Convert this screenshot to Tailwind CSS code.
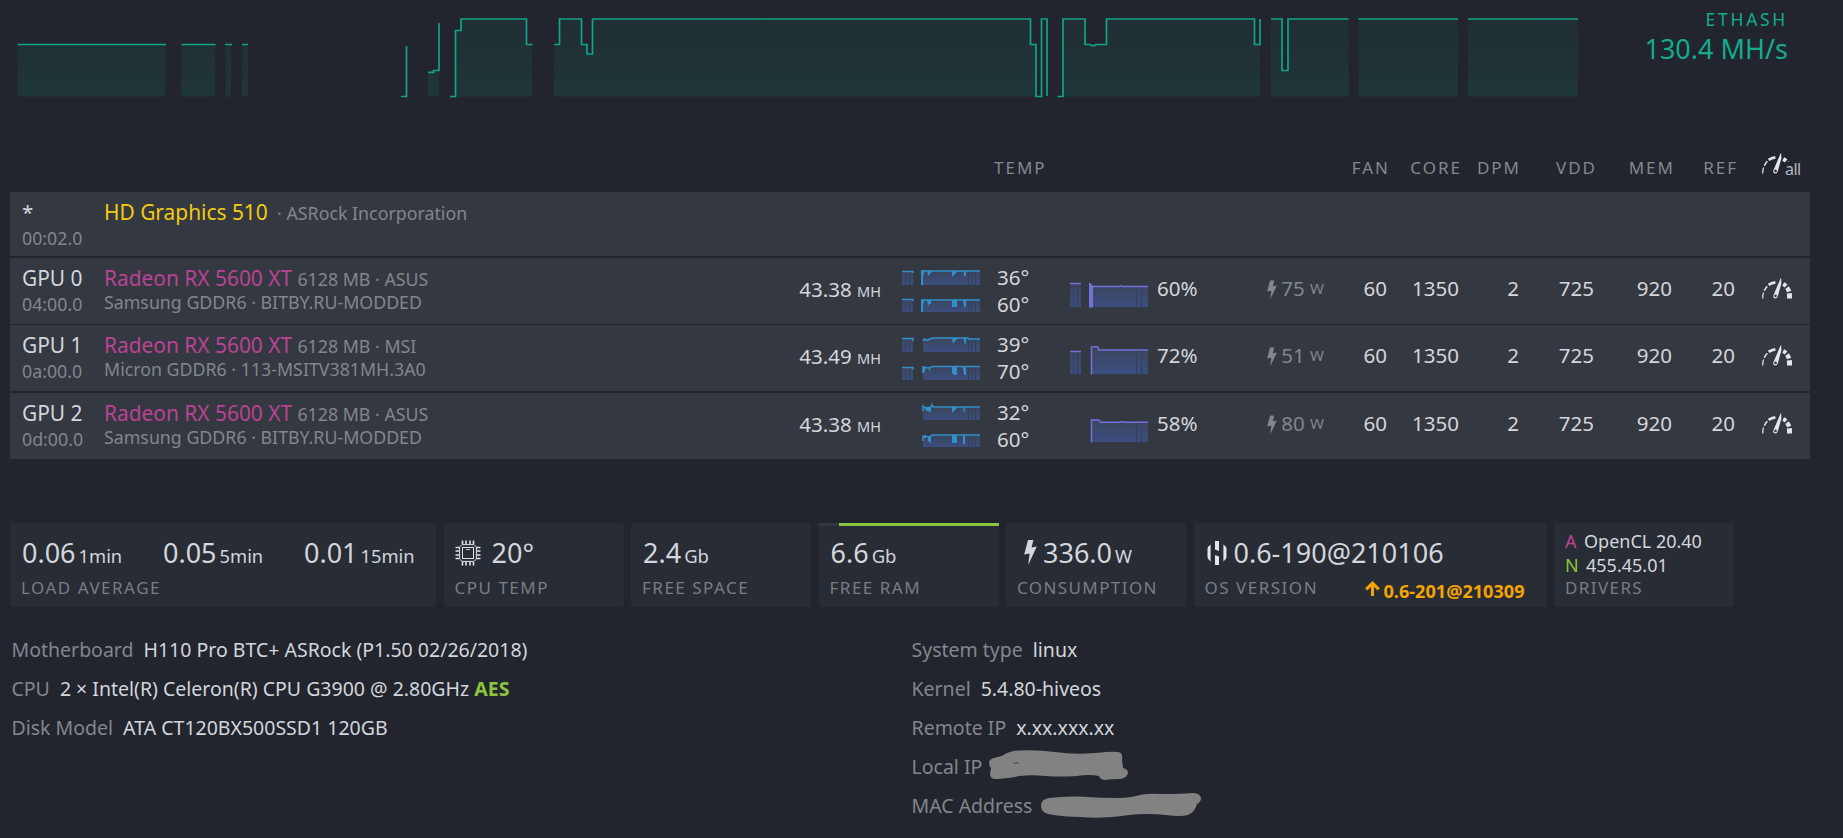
<!DOCTYPE html>
<html lang="en">

<head>
    <meta charset="utf-8">
    <title>Worker</title>
    <script src="https://cdn.jsdelivr.net/npm/@tailwindcss/browser@4"></script>
</head>

<body class="bg-[#22252d] text-[#d3d6dc] font-['Noto_Sans','Open_Sans',sans-serif] w-[1843px] h-[838px] overflow-hidden">

    <!-- shared icons and gradients -->
    <svg class="absolute w-0 h-0">
        <defs>
            <linearGradient id="hash" x1="0" y1="19" x2="0" y2="96" gradientUnits="userSpaceOnUse">
                <stop offset="0" stop-color="#202e32" />
                <stop offset="1" stop-color="#1f3638" />
            </linearGradient>
            <linearGradient id="load" x1="0" y1="0" x2="0" y2="1">
                <stop offset="0" stop-color="#3b455b" />
                <stop offset="1" stop-color="#3b4e80" />
            </linearGradient>
            <symbol id="gauge" viewBox="0 0 30 21">
                <g fill="none" stroke="currentColor">
                    <path d="M.8 20.5Q.6 17 1.6 14.5" stroke-width="1.2" />
                    <path d="M2.3 12.8Q3.4 10.2 5.3 8.2" stroke-width="1.6" />
                    <path d="M6.6 6.9Q9.5 5 13.4 4.4" stroke-width="2.8" />
                    <path d="M21.2 6Q22.8 6.8 24 8" stroke-width="4" />
                    <path d="M25 9.6Q26.4 11.4 27 13.6" stroke-width="4.4" />
                    <path d="M27.3 15.2Q27.6 17.5 27.5 20.5" stroke-width="5" />
                </g>
                <path fill="currentColor" fill-rule="evenodd" d="M18.8 0L19.2 .6L19.4 5.5L15.8 18.2Q15.1 20.8 12.8 20.6Q10.8 19.8 11.3 17.4ZM13.5 16.6a1.3 1.3 0 1 0 .1 0Z" />
            </symbol>
            <symbol id="bolt" viewBox="0 0 13 25">
                <path fill="currentColor" d="M4 0H9.4L7.6 7.6L12.8 6.6L4.2 25L5.6 13.6L.2 14.6Z" />
            </symbol>
        </defs>
    </svg>

    <header class="flex h-[142px]">
        <svg class="w-[1600px] h-[110px] shrink-0" viewBox="0 0 1600 110">
            <path fill="url(#hash)" d="M17.5 44.5H165.5V96.5H17.5ZM181.5 44.5H215V96.5H181.5ZM225.5 44.5H231V96.5H225.5ZM242 44.5H248V96.5H242ZM428 72H433V70.5H439V96.5H428ZM455.5 96.5V30.5H461V19H526.5V44.5H532V96.5ZM554 96.5V44.5H559.5V19H581.5V44.5H587V54H592.5V19H1030.5V44.5H1036V96.5ZM1063 96.5V19H1085V44.5H1106.5V19H1254.5V44.5H1260V96.5ZM1271 96.5V19H1282V70.5H1288V19H1348.5V96.5ZM1358.5 19H1458V96.5H1358.5ZM1468 19H1578V96.5H1468Z" />
            <path fill="none" stroke="#10a488" stroke-width="1.7" d="M17.5 44.5H166M181.5 44.5H215.5M225 44.5H232M242 44.5H248M401 96.5H406.5V46M428 72.3H433.5V70.5H439V23M450 96.5H455.5V30.5H461V19H526.5V44.5H532.5M554 44.5H559.5V19H581.5V44.5H587V54H592.5V19H1030.5V44.5H1036V96.5H1041.5V19H1047V96M1057.5 96.5H1063V19H1085V44.5H1090L1091.5 45.7H1094.5L1096 44.5H1106.5V19H1254.5V44.5H1260V19M1271 19H1282V70.5H1288V19H1348.5M1358.5 19H1458M1468 19H1578" />
        </svg>
        <div class="w-[188px] pt-[7px] text-right text-[#14ab8e]">
            <div class="text-[17.5px] leading-6 tracking-[2.7px]">ETHASH</div>
            <div class="text-[27px] leading-9">130.4 MH/s</div>
        </div>
    </header>

    <div class="grid grid-cols-[83px_775px_100px_90px_78px_109px_67px_63px_72px_59px_76px_78px_63px_66px] h-[50px] items-center pt-0.5 pl-[25px] text-right text-[17px] tracking-[2px] text-[#84888f]">
        <div></div>
        <div></div>
        <div></div>
        <div class="text-left pl-[11px]">TEMP</div>
        <div></div>
        <div></div>
        <div></div>
        <div>FAN</div>
        <div>CORE</div>
        <div>DPM</div>
        <div>VDD</div>
        <div>MEM</div>
        <div>REF</div>
        <div class="flex items-end pl-[24px] -mt-[9px] tracking-normal text-[#e3e5e8]">
            <svg class="w-[30px] h-[21px] shrink-0"><use href="#gauge" /></svg>
            <span class="-ml-[7px] h-[12px] bg-[#22252d] text-base leading-[14px] tracking-[-0.5px] text-[#b4b7bd]">all</span>
        </div>
    </div>

    <main class="ml-[10px] w-[1800px]">
        <section class="text-[20.5px] leading-[27px]">
            <div class="flex h-16 mb-0.5 bg-[#343840] pl-3 pt-[7px]">
                <div class="w-[82px]">
                    <div>*</div>
                    <div class="text-[17.8px] leading-[25px] text-[#82868d]">00:02.0</div>
                </div>
                <div><span class="text-[20.9px] text-[#f5cb11]">HD Graphics 510</span> <span class="ml-1 text-[17.8px] text-[#82868d]">· ASRock Incorporation</span></div>
            </div>

            <div class="grid grid-cols-[82px_777px_99px_90px_78px_109px_67px_63px_72px_60px_75px_78px_63px_57px] h-[66px] mb-px bg-[#343840] pl-3 text-right">
                <div class="pt-[7px] text-left">
                    <div class="text-[20.9px]">GPU 0</div>
                    <div class="text-[17.8px] leading-[25px] text-[#82868d]">04:00.0</div>
                </div>
                <div class="flex justify-between">
                    <div class="pt-[7px] text-left">
                        <div class="h-[27px]"><span class="text-[20.9px] text-[#bb4395]">Radeon RX 5600 XT</span> <span class="text-[17.8px] text-[#82868d]">6128 MB · ASUS</span></div>
                        <div class="text-[17.8px] leading-[21px] text-[#82868d]">Samsung GDDR6 · BITBY.RU-MODDED</div>
                    </div>
                    <div class="pt-[18px]">43.38 <span class="text-[14.5px]">MH</span></div>
                </div>
                <svg class="w-[78px] h-[50px] mt-[10px] ml-auto" viewBox="0 0 78 50">
                    <path fill="url(#load)" d="M0 4H11V17H0ZM19 3H78V17H19Z" />
                    <path fill="url(#load)" d="M0 32H11V44H0ZM19 32H78V44H19Z" />
                    <path stroke="#34405a" d="M3.5 5V17M7.5 5V17M66.5 4V17M69.5 4V17M73.5 4V17M3.5 33V44M7.5 33V44M66.5 33V44M69.5 33V44M73.5 33V44" />
                    <path fill="none" stroke="#3190cc" stroke-width="1.5" d="M0 3.5H11V5M19 3H78M0 31.5H11V33M19 32H78" />
                    <path fill="#3190cc" d="M19 2H23L21 8V17H19ZM25 3H30L28 6L26 8ZM50 3H56L53 6L50 9ZM61 3H64V8H62V5ZM19 32H23L21 37V44H19ZM25 32H29V36H27L26 39ZM50 32H55V39H50ZM61 32H64V39H62Z" />
                </svg>
                <div class="pt-1.5 pl-[17px] text-left">36°<br>60°</div>
                <svg class="w-[78px] h-[50px] mt-[10px]" viewBox="0 0 78 50">
                    <path fill="url(#load)" d="M0 16H11V39H0ZM20 19H78V39H20Z" />
                    <path stroke="#34405a" d="M3.5 17V39M7.5 17V39M66.5 20V39M71.5 20V39" />
                    <path fill="none" stroke="#7470dc" stroke-width="1.3" d="M0 15.5H11M20 18.5H50L51 17.5L53 18.5H78" />
                    <path fill="#7470dc" d="M19 15H20.5L23 18V39.5H19Z" />
                </svg>
                <div class="pt-[17px] pl-[9px] text-left">60%</div>
                <div class="flex justify-end pt-[17px] text-[#82868d]"><svg class="w-[10px] h-[24px] mr-[4px] mt-[3px]"><use href="#bolt" /></svg>75&nbsp;<span class="text-[15px]">W</span></div>
                <div class="pt-[17px]">60</div>
                <div class="pt-[17px]">1350</div>
                <div class="pt-[17px]">2</div>
                <div class="pt-[17px]">725</div>
                <div class="pt-[17px]">920</div>
                <div class="pt-[17px]">20</div>
                <svg class="w-[30px] h-[21px] mt-5 ml-auto text-[#e3e5e8]"><use href="#gauge" /></svg>
            </div>

            <div class="grid grid-cols-[82px_777px_99px_90px_78px_109px_67px_63px_72px_60px_75px_78px_63px_57px] h-[66px] mb-0.5 bg-[#343840] pl-3 text-right">
                <div class="pt-[7px] text-left">
                    <div class="text-[20.9px]">GPU 1</div>
                    <div class="text-[17.8px] leading-[25px] text-[#82868d]">0a:00.0</div>
                </div>
                <div class="flex justify-between">
                    <div class="pt-[7px] text-left">
                        <div class="h-[27px]"><span class="text-[20.9px] text-[#bb4395]">Radeon RX 5600 XT</span> <span class="text-[17.8px] text-[#82868d]">6128 MB · MSI</span></div>
                        <div class="text-[17.8px] leading-[21px] text-[#82868d]">Micron GDDR6 · 113-MSITV381MH.3A0</div>
                    </div>
                    <div class="pt-[18px]">43.49 <span class="text-[14.5px]">MH</span></div>
                </div>
                <svg class="w-[78px] h-[50px] mt-[10px] ml-auto" viewBox="0 0 78 50">
                    <path fill="url(#load)" d="M0 4H11V17H0ZM21 3H78V17H21Z" />
                    <path fill="url(#load)" d="M0 33H11V45H0ZM21 32H78V45H21Z" />
                    <path stroke="#34405a" d="M3.5 5V17M7.5 5V17M66.5 4V17M69.5 4V17M73.5 4V17M3.5 34V45M7.5 34V45M66.5 33V45M69.5 33V45M73.5 33V45" />
                    <path fill="none" stroke="#3190cc" stroke-width="1.5" d="M0 3.5H11V6M21 6L22 4L25 5.5L30 3H66L67 4H78M0 32.5H11V34.5M21 38V32L27 33L30 31.5H78" />
                    <path fill="#3190cc" d="M50 3H56L53 6L51 9ZM61 3H64V9H63ZM21 32H24L22 38H21ZM27 32H29L27 37ZM50 32H55V40H52L50 38ZM61 32H64V40H62Z" />
                </svg>
                <div class="pt-1.5 pl-[17px] text-left">39°<br>70°</div>
                <svg class="w-[78px] h-[50px] mt-[10px]" viewBox="0 0 78 50">
                    <path fill="url(#load)" d="M0 16H11V39H0ZM21 12H28V15H78V39H21Z" />
                    <path stroke="#34405a" d="M3.5 17V39M7.5 17V39M66.5 16V39M71.5 16V39" />
                    <path fill="none" stroke="#7470dc" stroke-width="1.5" d="M0 16.5H11M21.5 39.5V12L27 11.5L28.5 13V15H78" />
                </svg>
                <div class="pt-[17px] pl-[9px] text-left">72%</div>
                <div class="flex justify-end pt-[17px] text-[#82868d]"><svg class="w-[10px] h-[24px] mr-[4px] mt-[3px]"><use href="#bolt" /></svg>51&nbsp;<span class="text-[15px]">W</span></div>
                <div class="pt-[17px]">60</div>
                <div class="pt-[17px]">1350</div>
                <div class="pt-[17px]">2</div>
                <div class="pt-[17px]">725</div>
                <div class="pt-[17px]">920</div>
                <div class="pt-[17px]">20</div>
                <svg class="w-[30px] h-[21px] mt-5 ml-auto text-[#e3e5e8]"><use href="#gauge" /></svg>
            </div>

            <div class="grid grid-cols-[82px_777px_99px_90px_78px_109px_67px_63px_72px_60px_75px_78px_63px_57px] h-[66px] bg-[#343840] pl-3 text-right">
                <div class="pt-[7px] text-left">
                    <div class="text-[20.9px]">GPU 2</div>
                    <div class="text-[17.8px] leading-[25px] text-[#82868d]">0d:00.0</div>
                </div>
                <div class="flex justify-between">
                    <div class="pt-[7px] text-left">
                        <div class="h-[27px]"><span class="text-[20.9px] text-[#bb4395]">Radeon RX 5600 XT</span> <span class="text-[17.8px] text-[#82868d]">6128 MB · ASUS</span></div>
                        <div class="text-[17.8px] leading-[21px] text-[#82868d]">Samsung GDDR6 · BITBY.RU-MODDED</div>
                    </div>
                    <div class="pt-[18px]">43.38 <span class="text-[14.5px]">MH</span></div>
                </div>
                <svg class="w-[78px] h-[50px] mt-[10px] ml-auto" viewBox="0 0 78 50">
                    <path fill="url(#load)" d="M21 5H78V17H21Z" />
                    <path fill="url(#load)" d="M21 33H78V44H21Z" />
                    <path stroke="#34405a" d="M66.5 5V17M69.5 5V17M73.5 5V17M66.5 33V44M69.5 33V44M73.5 33V44" />
                    <path fill="none" stroke="#3190cc" stroke-width="1.5" d="M21 8V3L24 5L29 4L30 1.5L31 4H78M21 38V33L28 34L30 32H78" />
                    <path fill="#3190cc" d="M22 5H29V9L25 8ZM50 4H56L53 7L50 10ZM61 4H63V9H62ZM22 32H24V35H22ZM26 33H29V40L26 38ZM50 32H55V40H50ZM61 32H63V41H61Z" />
                </svg>
                <div class="pt-1.5 pl-[17px] text-left">32°<br>60°</div>
                <svg class="w-[78px] h-[50px] mt-[10px]" viewBox="0 0 78 50">
                    <path fill="url(#load)" d="M21 17H29V19H78V39H21Z" />
                    <path stroke="#34405a" d="M66.5 20V39M71.5 20V39" />
                    <path fill="none" stroke="#7470dc" stroke-width="1.5" d="M21.5 39.5V17H29L30.5 19.3H50L52 18.5L54 19.3H78" />
                </svg>
                <div class="pt-[17px] pl-[9px] text-left">58%</div>
                <div class="flex justify-end pt-[17px] text-[#82868d]"><svg class="w-[10px] h-[24px] mr-[4px] mt-[3px]"><use href="#bolt" /></svg>80&nbsp;<span class="text-[15px]">W</span></div>
                <div class="pt-[17px]">60</div>
                <div class="pt-[17px]">1350</div>
                <div class="pt-[17px]">2</div>
                <div class="pt-[17px]">725</div>
                <div class="pt-[17px]">920</div>
                <div class="pt-[17px]">20</div>
                <svg class="w-[30px] h-[21px] mt-5 ml-auto text-[#e3e5e8]"><use href="#gauge" /></svg>
            </div>
        </section>

        <section class="grid grid-cols-[426px_180px_180px_180px_180px_353px_180px] gap-[7.5px] mt-16 h-[84px] text-[27px] leading-9">
            <div class="rounded bg-[#282c34] pt-3 pl-[11px]">
                <div class="flex h-9 pl-px">
                    <div class="w-[141px]">0.06<span class="ml-[3px] text-[18.3px]">1min</span></div>
                    <div class="w-[141px]">0.05<span class="ml-[3px] text-[18.3px]">5min</span></div>
                    <div>0.01<span class="ml-[3px] text-[18.3px]">15min</span></div>
                </div>
                <div class="mt-[5px] text-[17px] leading-6 tracking-[1.5px] text-[#797d84]">LOAD AVERAGE</div>
            </div>
            <div class="rounded bg-[#282c34] pt-3 pl-[11px]">
                <div class="flex h-9">
                    <svg class="w-[26px] h-[26px] mt-[5px] mr-[11px]" viewBox="0 0 26 26" fill="none" stroke="#dfe1e4">
                        <path d="M7 4.6H19L21.4 7V19L19 21.4H7L4.6 19V7Z" />
                        <rect x="7.5" y="7.5" width="11" height="11" />
                        <path stroke-width="1.6" d="M7.5 4V.5M11 4V.5M15 4V.5M18.5 4V.5M7.5 22V25.5M11 22V25.5M15 22V25.5M18.5 22V25.5M4 7.5H.5M4 11H.5M4 15H.5M4 18.5H.5M22 7.5H25.5M22 11H25.5M22 15H25.5M22 18.5H25.5" />
                        <path d="M11 9.5H15" stroke-width=".8" />
                    </svg>
                    20°
                </div>
                <div class="mt-[5px] text-[17px] leading-6 tracking-[1.5px] text-[#797d84]">CPU TEMP</div>
            </div>
            <div class="rounded bg-[#282c34] pt-3 pl-[11px]">
                <div class="h-9 pl-px">2.4<span class="ml-[3px] text-[18.5px]">Gb</span></div>
                <div class="mt-[5px] text-[17px] leading-6 tracking-[1.5px] text-[#797d84]">FREE SPACE</div>
            </div>
            <div class="rounded-b bg-[#282c34]">
                <div class="h-[3px] pl-5 bg-[#32363e]">
                    <div class="h-full bg-[#8bc43f]"></div>
                </div>
                <div class="h-[45px] pt-[9px] pl-[12px]">6.6<span class="ml-[3px] text-[18.5px]">Gb</span></div>
                <div class="pl-[11px] mt-[5px] text-[17px] leading-6 tracking-[1.5px] text-[#797d84]">FREE RAM</div>
            </div>
            <div class="rounded bg-[#282c34] pt-3 pl-[11px]">
                <div class="flex h-9">
                    <svg class="w-[13px] h-[25px] ml-[7px] mr-[6px] mt-[5px]"><use href="#bolt" /></svg>
                    <div>336.0<span class="ml-[3px] text-[18.3px]">W</span></div>
                </div>
                <div class="mt-[5px] text-[17px] leading-6 tracking-[1.4px] text-[#797d84]">CONSUMPTION</div>
            </div>
            <div class="rounded bg-[#282c34] pt-3 pl-[11px]">
                <div class="flex h-9">
                    <svg class="w-[20px] h-[24px] ml-[2px] mr-[7px] mt-[6px]" viewBox="0 0 20 24" fill="#e3e5e8">
                        <path d="M3.6 3.5V20.5Q.5 18.5 .5 16V8Q.5 5.500 3.600 3.500ZM16.400 3.500V20.500Q19.500 18.500 19.500 16V8Q19.500 5.500 16.400 3.500Z" />
                        <path d="M8 0H12V10L8 8.500ZM8 14L12 15.500V24H8Z" />
                    </svg>
                    0.6-190@210106
                </div>
                <div class="flex justify-between mt-[5px] pr-[22px] leading-6">
                    <div class="text-[17px] tracking-[1.5px] text-[#797d84]">OS VERSION</div>
                    <div class="flex pt-[3px] text-[18.1px] font-bold text-[#f5a400]">
                        <svg class="w-[15px] h-[15px] mt-[2px] mr-[4px]" viewBox="0 0 15 15" fill="none" stroke="#f5a400" stroke-width="3">
                            <path d="M7.5 15V2.2M1.2 8.4L7.5 2.2L13.8 8.4" />
                        </svg>
                        0.6-201@210309
                    </div>
                </div>
            </div>
            <div class="rounded bg-[#282c34] pt-[6px] pl-[11px] text-[18px] leading-6">
                <div><span class="inline-block w-[19px] text-[#bb4395]">A</span>OpenCL 20.40</div>
                <div><span class="inline-block w-[21px] text-[#8bc43f]">N</span>455.45.01</div>
                <div class="-mt-px text-[17px] tracking-[1.4px] text-[#797d84]">DRIVERS</div>
            </div>
        </section>

        <section class="grid grid-cols-[900px_900px] mt-[23px] pl-[1.5px] text-[19.5px] leading-[39px]">
            <div>
                <div><span class="mr-[10px] text-[#82868d]">Motherboard</span>H110 Pro BTC+ ASRock (P1.50 02/26/2018)</div>
                <div><span class="mr-[10px] text-[#82868d]">CPU</span>2 × Intel(R) Celeron(R) CPU G3900 @ 2.80GHz <span class="font-bold text-[#8bc43f]">AES</span></div>
                <div><span class="mr-[10px] text-[#82868d]">Disk Model</span>ATA CT120BX500SSD1 120GB</div>
            </div>
            <div>
                <div><span class="mr-[10px] text-[#82868d]">System type</span>linux</div>
                <div><span class="mr-[10px] text-[#82868d]">Kernel</span>5.4.80-hiveos</div>
                <div><span class="mr-[10px] text-[#82868d]">Remote IP</span>x.xx.xxx.xx</div>
                <div class="flex"><span class="w-[77px] text-[#82868d]">Local IP</span>
                    <svg class="w-[140px] h-[32px] mt-[3px]" viewBox="0 0 140 32">
                        <path fill="#828282" d="M0 12Q0 8 13 6Q20 1 30 0.5Q48 -.5 66 2Q85 5 106 3Q128 1 131 2.5Q134 4 133 10L134 18Q139 19 139 23Q138 28 131 29Q122 29 117 30Q111 30 110 26Q100 24 88 26Q70 27 57 26Q36 24 26 27Q12 29 5 29Q1 28 1 24L2 18Q0 16 0 12Z" />
                        <path d="M24 13.5L29 12.5V14" fill="none" stroke="#3c3d40" stroke-width=".8" />
                    </svg>
                </div>
                <div class="flex"><span class="w-[129px] text-[#82868d]">MAC Address</span>
                    <svg class="w-[161px] h-[25px] mt-[7px]" viewBox="0 0 161 25">
                        <path fill="#828282" d="M0 13Q0 6 8 5Q22 3 38 3.5Q60 5 80 5Q92 4 97 2.5Q105 0 120 1Q140 1 151 0Q159 0 160 5Q160 9 156 11Q154 19 147 22Q139 24 125 22Q105 20 88 22Q60 26 40 24Q22 24 7 21Q0 19 0 13Z" />
                    </svg>
                </div>
            </div>
        </section>
    </main>

</body>

</html>
